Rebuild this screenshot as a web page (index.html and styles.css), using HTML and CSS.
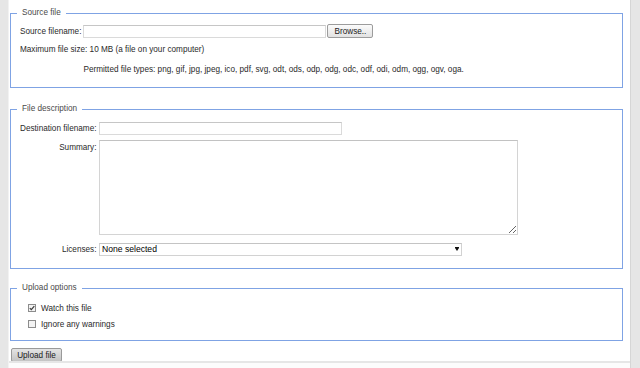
FILE: index.html
```html
<!DOCTYPE html>
<html lang="en">
<head>
    <meta charset="UTF-8">
    <title>Upload file</title>
    <link rel="stylesheet" href="styles.css">
</head>
<body>
    <div class="page">
        <form class="upload-form">

            <fieldset class="source">
                <legend>Source file</legend>
                <div class="rows rows-source">
                    <label class="row-label" for="wpUploadFile">Source filename:</label>
                    <div class="file-pick">
                        <input type="text" id="wpUploadFile" class="text-input file-input">
                        <button type="button" class="btn browse">Browse..</button>
                    </div>
                    <p class="hint max-size">Maximum file size: 10 MB (a file on your computer)</p>
                    <p class="hint types">Permitted file types: png, gif, jpg, jpeg, ico, pdf, svg, odt, ods, odp, odg, odc, odf, odi, odm, ogg, ogv, oga.</p>
                </div>
            </fieldset>

            <fieldset class="description">
                <legend>File description</legend>
                <div class="rows rows-desc">
                    <label class="row-label" for="wpDestFile">Destination filename:</label>
                    <div class="cell">
                        <input type="text" id="wpDestFile" class="text-input dest-input">
                    </div>

                    <label class="row-label summary-label" for="wpUploadDescription">Summary:</label>
                    <div class="cell">
                        <textarea id="wpUploadDescription" class="summary"></textarea>
                    </div>

                    <label class="row-label licenses-label" for="wpLicense">Licenses:</label>
                    <div class="cell licenses-cell">
                        <span class="select-wrap">
                            <select id="wpLicense" class="licenses">
                                <option>None selected</option>
                            </select>
                        </span>
                    </div>
                </div>
            </fieldset>

            <fieldset class="options">
                <legend>Upload options</legend>
                <label class="check-row">
                    <span class="box">
                        <svg width="8" height="8" viewBox="0 0 8 8">
                            <rect x="0.5" y="0.5" width="7" height="7" fill="#f3f3f3" stroke="#8c8c8c"/>
                            <path d="M1.8 4.1 L3.3 5.7 L6.3 2.1" fill="none" stroke="#3a3a3a" stroke-width="1.2"/>
                        </svg>
                    </span>
                    Watch this file
                </label>
                <label class="check-row">
                    <span class="box">
                        <svg width="8" height="8" viewBox="0 0 8 8">
                            <rect x="0.5" y="0.5" width="7" height="7" fill="#f3f3f3" stroke="#8c8c8c"/>
                        </svg>
                    </span>
                    Ignore any warnings
                </label>
            </fieldset>

            <button type="submit" class="btn upload">Upload file</button>
        </form>
        <div class="footer-line"></div>
    </div>
</body>
</html>
```

FILE: styles.css
```css
body {
    margin: 0;
    background-color: #e6e6e6;
    font-family: "Liberation Sans", Arial, sans-serif;
    font-size: 8.2px;
    color: #2a2a2a;
}

.page {
    margin-left: 8px;
    width: 623px;
    min-height: 368px;
    background-color: #fff;
    border-right: 1px solid #d6d6d6;
    border-left: 1px solid #f2f2f2;
    box-sizing: border-box;
}

.upload-form {
    padding: 7px 7px 0 1px;
}

/* fieldsets */
fieldset {
    margin: 0 0 15px;
    padding: 5px 9px 12px;
    border: 1px solid #7fa3e4;
    min-width: 0;
}

legend {
    padding: 0 5px;
    margin-left: -3px;
    line-height: 12px;
    color: #4a4a4a;
}

.description {
    margin-bottom: 13px;
    padding-top: 7px;
    padding-bottom: 12px;
}

.options {
    margin-bottom: 7px;
    padding-top: 6px;
    padding-bottom: 8px;
}

/* rows */
.rows {
    display: grid;
    grid-template-columns: auto 1fr;
    align-items: center;
}

.rows-source {
    column-gap: 2px;
}

.rows-desc {
    column-gap: 2.5px;
    row-gap: 5px;
}

.row-label {
    justify-self: end;
    line-height: 11px;
}

.cell {
    display: flex;
    align-items: center;
}

.file-pick {
    display: flex;
    align-items: center;
    height: 14px;
}

.hint {
    margin: 6px 0 0;
    line-height: 11px;
}

.max-size {
    grid-column: 1 / -1;
}

.types {
    grid-column: 2;
    margin-top: 9px;
}

/* inputs */
.text-input {
    box-sizing: border-box;
    height: 13px;
    padding: 0 2px;
    border: 1px solid #dadada;
    border-top-color: #c6c6c6;
    background: #fff;
    font: inherit;
}

.file-input {
    width: 243px;
}

.dest-input {
    width: 243px;
}

.summary-label {
    align-self: start;
    padding-top: 2px;
}

.summary {
    box-sizing: border-box;
    width: 419px;
    height: 95px;
    margin: 0;
    border: 1px solid #d4d4d4;
    border-top-color: #c2c2c2;
    font: inherit;
}

.licenses-label,
.licenses-cell {
    margin-top: 3px;
}

.select-wrap {
    position: relative;
    display: inline-block;
}

.select-wrap::after {
    content: "";
    position: absolute;
    right: 3px;
    top: 5px;
    border-left: 2.5px solid transparent;
    border-right: 2.5px solid transparent;
    border-top: 3px solid #111;
    box-shadow: 0 -1px 0 0 #111;
}

.licenses {
    appearance: none;
    box-sizing: border-box;
    width: 363px;
    height: 13px;
    padding: 0 0 0 2px;
    border: 1px solid #d2d2d2;
    border-top-color: #c4c4c4;
    border-radius: 0;
    background: #fff;
    font-family: inherit;
    font-size: 8.6px;
    line-height: 11px;
    color: #000;
}

/* checkboxes */
.check-row {
    display: flex;
    align-items: center;
    height: 16px;
    padding-left: 8px;
    gap: 5px;
}

.box {
    display: flex;
    width: 8px;
    height: 8px;
}

/* buttons */
.btn {
    box-sizing: border-box;
    font: inherit;
    color: #1a1a1a;
    border: 1px solid #9c9c9c;
    border-radius: 2px;
    cursor: pointer;
}

.browse {
    width: 46px;
    height: 14px;
    margin-left: 1px;
    padding: 0;
    background: linear-gradient(#fbfbfb, #e2e2e2);
}

.upload {
    display: block;
    width: 51px;
    height: 14px;
    margin-left: 1px;
    padding: 0;
    border-color: #9a9a9a;
    background: linear-gradient(#e4e4e4, #c4c4c4);
}

.footer-line {
    border-top: 2px solid #e6e6e6;
    height: 6px;
    margin-top: -1px;
    background: #fcfcfc;
}
```
